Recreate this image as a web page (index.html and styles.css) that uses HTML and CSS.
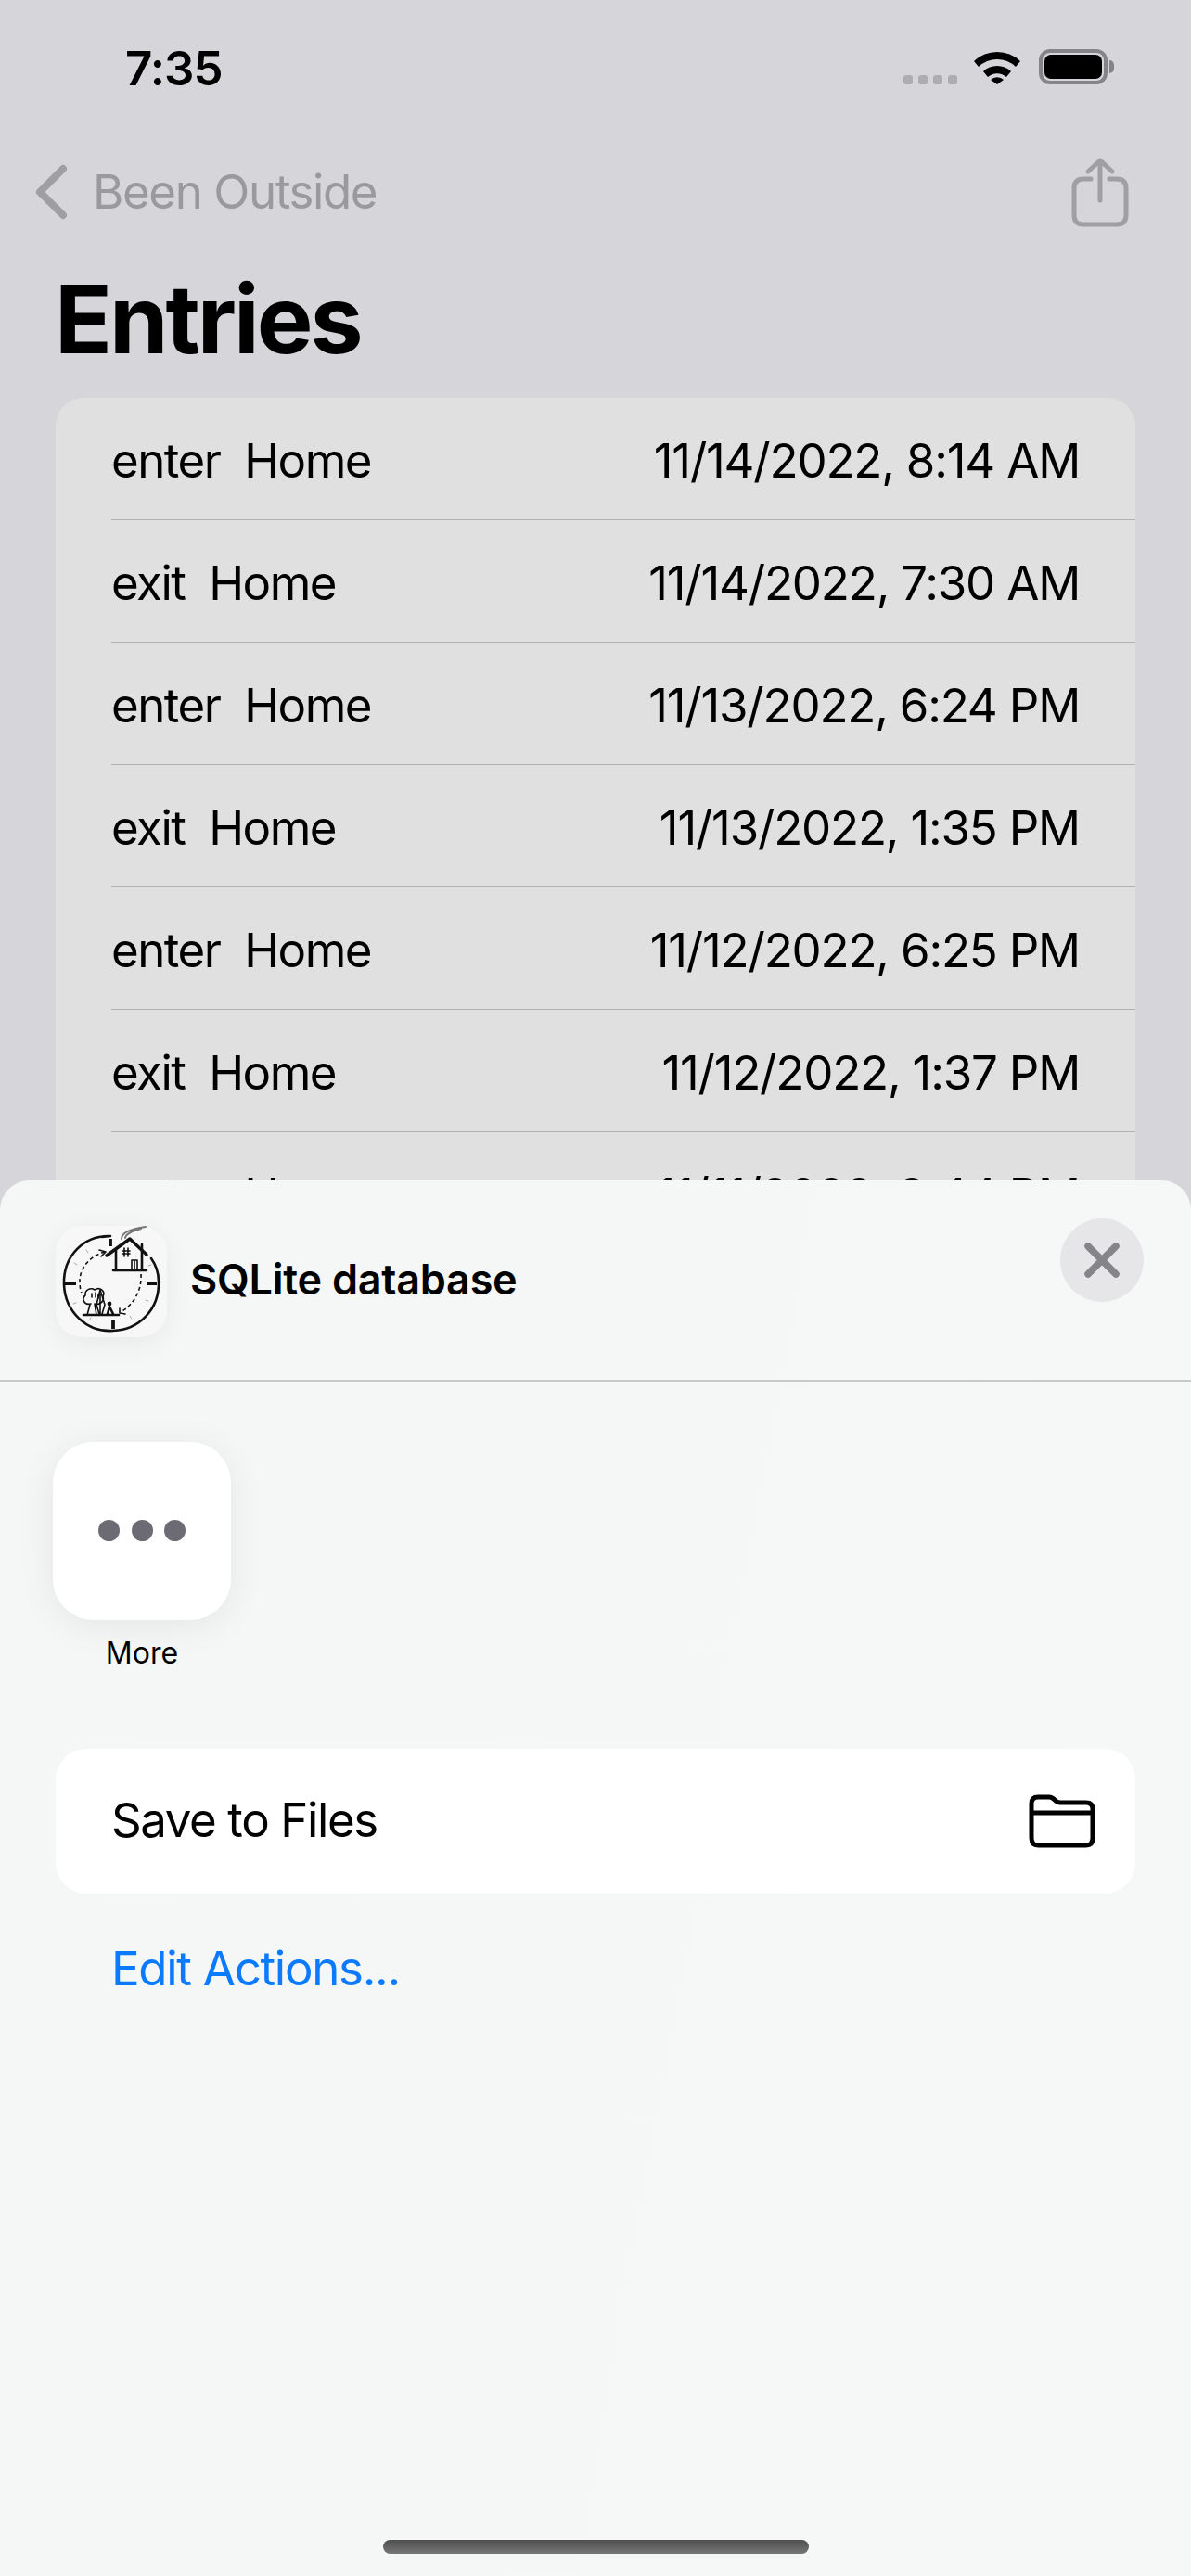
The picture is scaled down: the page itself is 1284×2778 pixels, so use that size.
FILE: index.html
```html
<!DOCTYPE html>
<html lang="en">
<head>
    <meta charset="UTF-8">
    <meta name="viewport" content="width=device-width, initial-scale=1.0">
    <title>Entries</title>
    <link rel="stylesheet" href="styles.css">
</head>
<body>
    <div class="status-bar">
        <span class="time">7:35</span>
        <div class="status-icons">
            <div class="signal"><i></i><i></i><i></i><i></i></div>
            <svg class="wifi" width="50" height="38" viewBox="0 0 50 38">
                <path d="M0 13 A36 36 0 0 1 50 13 L45 19 A29 29 0 0 0 5 19 Z"/>
                <path d="M10 24 A22 22 0 0 1 40 24 L35 30 A15 15 0 0 0 15 30 Z"/>
                <path d="M18 33 A10 10 0 0 1 32 33 L25 38 Z"/>
            </svg>
            <div class="battery"><div class="battery-fill"></div></div>
        </div>
    </div>

    <div class="nav-bar">
        <div class="back">
            <svg class="back-chevron" width="36" height="60" viewBox="0 0 36 60">
                <path d="M30 5 L5 30 L30 55"/>
            </svg>
            <span>Been Outside</span>
        </div>
        <svg class="share" width="64" height="76" viewBox="0 0 64 76">
            <path d="M22 23 H14 Q4 23 4 33 V62 Q4 72 14 72 H50 Q60 72 60 62 V33 Q60 23 50 23 H42"/>
            <path d="M32 46 V3 M19 15 L32 3 L45 15"/>
        </svg>
    </div>

    <h1 class="title">Entries</h1>

    <div class="entries">
        <div class="entry"><span class="entry-name">enter&nbsp; Home</span><span class="entry-date">11/14/2022, 8:14 AM</span></div>
        <div class="entry"><span class="entry-name">exit&nbsp; Home</span><span class="entry-date">11/14/2022, 7:30 AM</span></div>
        <div class="entry"><span class="entry-name">enter&nbsp; Home</span><span class="entry-date">11/13/2022, 6:24 PM</span></div>
        <div class="entry"><span class="entry-name">exit&nbsp; Home</span><span class="entry-date">11/13/2022, 1:35 PM</span></div>
        <div class="entry"><span class="entry-name">enter&nbsp; Home</span><span class="entry-date">11/12/2022, 6:25 PM</span></div>
        <div class="entry"><span class="entry-name">exit&nbsp; Home</span><span class="entry-date">11/12/2022, 1:37 PM</span></div>
        <div class="entry"><span class="entry-name">enter&nbsp; Home</span><span class="entry-date">11/11/2022, 8:44 PM</span></div>
    </div>

    <div class="sheet">
        <div class="sheet-header">
            <div class="app-icon">
                <svg width="120" height="120" viewBox="0 0 120 120">
                    <g class="sketch">
                        <path class="ring" d="M59 11 C30 10 8 33 9 63 C10 92 33 115 62 113 C90 112 112 90 111 60 C111 50 108 42 103 35 M50 12 L59 11"/>
                        <path class="tick" d="M59 14 V22 M10 62 H22 M98 62 H109 M62 102 V111"/>
                        <path class="roof" d="M55 32 L80 14 L98 31"/>
                        <path class="wall" d="M65 25 V48 M93 20 V48 M62 48 H98"/>
                        <path class="thin" d="M82 48 V37 H88 V48 M85 37 V48 M72 27 H80 M72 30 H80 M74 24 V33 M78 24 V33"/>
                        <path class="smoke" d="M71 14 C71 7 82 3 97 1 M75 13 C76 8 84 5 92 3"/>
                        <path class="dash" d="M53 28 C38 32 27 44 26 58 C26 63 26 68 28 72"/>
                        <path class="dash" d="M92 52 C93 70 84 85 70 93"/>
                        <path class="thin" d="M47 26 L54 28 L49 33 M69 89 L69 94 L75 95"/>
                        <path class="thin" d="M38 84 C30 86 28 78 32 75 C31 69 38 66 42 69 C48 65 54 71 51 76 C53 82 46 86 42 84 M37 85 L34 96 M42 84 L44 96"/>
                        <path class="thin" d="M39 73 V77 M43 72 V77 M46 74 V78"/>
                        <path class="thin" d="M48 69 L44 85 L47 95 M48 69 L53 85 L50 95 M48 74 V95"/>
                        <path class="wall" d="M30 96 H68"/>
                        <circle class="head" cx="58" cy="84" r="2.4"/>
                        <path class="wall" d="M58 87 L56 95 M58 87 L62 95"/>
                        <path class="faint" d="M33 26 L35 29 M20 40 L23 42 M19 84 L22 83 M36 102 L38 99 M82 100 L80 97 M100 81 L97 80 M103 42 L100 43"/>
                    </g>
                </svg>
            </div>
            <span class="doc-name">SQLite database</span>
            <button class="close-btn">
                <svg width="38" height="38" viewBox="0 0 38 38">
                    <path d="M4 4 L34 34 M34 4 L4 34"/>
                </svg>
            </button>
        </div>

        <div class="apps">
            <div class="app">
                <div class="more-tile"><i></i><i></i><i></i></div>
                <span class="app-label">More</span>
            </div>
        </div>

        <div class="action-card">
            <span class="action-label">Save to Files</span>
            <svg class="folder" width="72" height="58" viewBox="0 0 72 58">
                <path d="M10 3 H22 C28 3 28 9 34 9 H62 Q69 9 69 16 V47 Q69 55 62 55 H10 Q3 55 3 47 V10 Q3 3 10 3 Z M3 20 H69"/>
            </svg>
        </div>

        <div class="edit-actions">Edit Actions...</div>

        <div class="home-indicator"></div>
    </div>
</body>
</html>
```

FILE: styles.css
```css
html, body {
    margin: 0;
    height: 100%;
}
body {
    position: relative;
    width: 1284px;
    height: 2778px;
    overflow: hidden;
    font-family: Inter, "Noto Sans", sans-serif;
    background-color: #d5d5da;
    color: #000;
}

/* status bar */
.status-bar {
    height: 150px;
    box-sizing: border-box;
    padding: 46px 90px 0 135px;
    display: flex;
    justify-content: space-between;
    align-items: flex-start;
}
.time {
    font-size: 51px;
    line-height: 52px;
    font-weight: 600;
    letter-spacing: -1px;
    margin-top: 2px;
}
.status-icons {
    display: flex;
    align-items: flex-start;
    margin-top: 7px;
}
.signal {
    display: flex;
    gap: 6px;
    margin-top: 28px;
    margin-right: 18px;
}
.signal i {
    width: 10px;
    height: 10px;
    border-radius: 3px;
    background-color: #adadb0;
}
.wifi {
    margin-right: 20px;
}
.battery {
    position: relative;
    width: 74px;
    height: 38px;
    box-sizing: border-box;
    border: 4px solid #858589;
    border-radius: 12px;
    padding: 2px;
}
.battery::after {
    content: "";
    position: absolute;
    right: -11px;
    top: 8px;
    width: 5px;
    height: 14px;
    border-radius: 0 6px 6px 0;
    background-color: #858589;
}
.battery-fill {
    height: 100%;
    border-radius: 7px;
    background-color: #000;
}

/* nav */
.nav-bar {
    display: flex;
    justify-content: space-between;
    align-items: flex-start;
    height: 126px;
    padding: 20px 66px 0 38px;
    box-sizing: border-box;
    color: #9a9a9d;
}
.back {
    display: flex;
    align-items: center;
    gap: 26px;
    margin-top: 7px;
    font-size: 51px;
    line-height: 60px;
    letter-spacing: -1.4px;
}
.back-chevron path {
    fill: none;
    stroke: #9f9fa2;
    stroke-width: 8;
    stroke-linecap: round;
    stroke-linejoin: round;
}
.share path {
    fill: none;
    stroke: #a0a0a3;
    stroke-width: 5;
    stroke-linecap: round;
    stroke-linejoin: round;
}
.title {
    margin: 0;
    padding-left: 59px;
    height: 153px;
    font-size: 102px;
    line-height: 136px;
    font-weight: 700;
    letter-spacing: -3px;
}

/* list behind the sheet */
.entries {
    margin: 0 60px;
    background-color: #e0e0e0;
    border-radius: 30px;
    padding-left: 60px;
}
.entry {
    display: flex;
    justify-content: space-between;
    align-items: center;
    height: 131px;
    padding-right: 60px;
    border-bottom: 1.5px solid #b0b0b1;
    font-size: 51px;
}
.entry span {
    margin-top: 3px;
}
.entry-name {
    letter-spacing: -1.5px;
}
.entry-date {
    letter-spacing: -1.2px;
}

/* share sheet */
.sheet {
    position: absolute;
    left: 0;
    right: 0;
    top: 1273px;
    bottom: 0;
    border-radius: 32px 32px 0 0;
    background: linear-gradient(100deg, #f5f7f7, #f6f7f7);
}
.sheet-header {
    position: relative;
    display: flex;
    align-items: center;
    height: 217px;
    box-sizing: border-box;
    padding: 0 60px 0 60px;
    border-bottom: 2px solid #c9c9cb;
}
.app-icon {
    width: 120px;
    height: 120px;
    margin-top: 2px;
    border-radius: 28px;
    background-color: #f7f7f7;
    box-shadow: 0 6px 30px rgba(0, 0, 0, 0.06);
}
.sketch path {
    fill: none;
    stroke: #111;
    stroke-linecap: round;
    stroke-linejoin: round;
}
.sketch .ring { stroke-width: 2.6; }
.sketch .tick { stroke-width: 3.8; stroke-linecap: butt; }
.sketch .roof { stroke-width: 3.4; }
.sketch .wall { stroke-width: 2.6; }
.sketch .thin { stroke-width: 1.6; }
.sketch .smoke { stroke: #777; stroke-width: 2; }
.sketch .dash { stroke-width: 1.6; stroke-dasharray: 4 3; stroke-linecap: butt; }
.sketch .faint { stroke: #aaa; stroke-width: 1; }
.sketch .head { fill: #111; }

.doc-name {
    margin-left: 25px;
    margin-bottom: 3px;
    font-size: 45px;
    font-weight: 600;
    letter-spacing: -0.25px;
}
.close-btn {
    position: absolute;
    left: 1143px;
    top: 41px;
    width: 90px;
    height: 90px;
    padding: 0;
    border: none;
    border-radius: 50%;
    background-color: #e6e6e8;
    display: flex;
    align-items: center;
    justify-content: center;
}
.close-btn path {
    fill: none;
    stroke: #858589;
    stroke-width: 7.5;
    stroke-linecap: round;
}

.apps {
    display: flex;
    padding: 65px 0 0 57px;
}
.app {
    display: flex;
    flex-direction: column;
    align-items: center;
    width: 192px;
}
.more-tile {
    display: flex;
    align-items: center;
    justify-content: center;
    gap: 12.5px;
    width: 192px;
    height: 192px;
    box-sizing: border-box;
    padding-bottom: 2px;
    border-radius: 44px;
    background-color: #fff;
    box-shadow: 0 6px 40px rgba(0, 0, 0, 0.07);
}
.more-tile i {
    width: 23px;
    height: 23px;
    border-radius: 50%;
    background-color: #6c6b74;
}
.app-label {
    margin-top: 16px;
    font-size: 32px;
    line-height: 40px;
}

.action-card {
    display: flex;
    justify-content: space-between;
    align-items: center;
    height: 156px;
    box-sizing: border-box;
    margin: 83px 60px 0;
    padding: 0 43px 0 60px;
    border-radius: 33px;
    background-color: #fff;
    font-size: 51px;
    letter-spacing: -1.4px;
}
.action-label {
    margin-bottom: 3px;
}
.folder path {
    fill: none;
    stroke: #000;
    stroke-width: 5;
    stroke-linejoin: round;
}
.edit-actions {
    margin: 51px 0 0 120px;
    font-size: 51px;
    line-height: 60px;
    letter-spacing: -1.3px;
    color: #0a7aff;
}
.home-indicator {
    position: absolute;
    left: 413px;
    top: 1466px;
    width: 459px;
    height: 15px;
    border-radius: 8px;
    background: linear-gradient(#4e4e4e, #777);
}
```
